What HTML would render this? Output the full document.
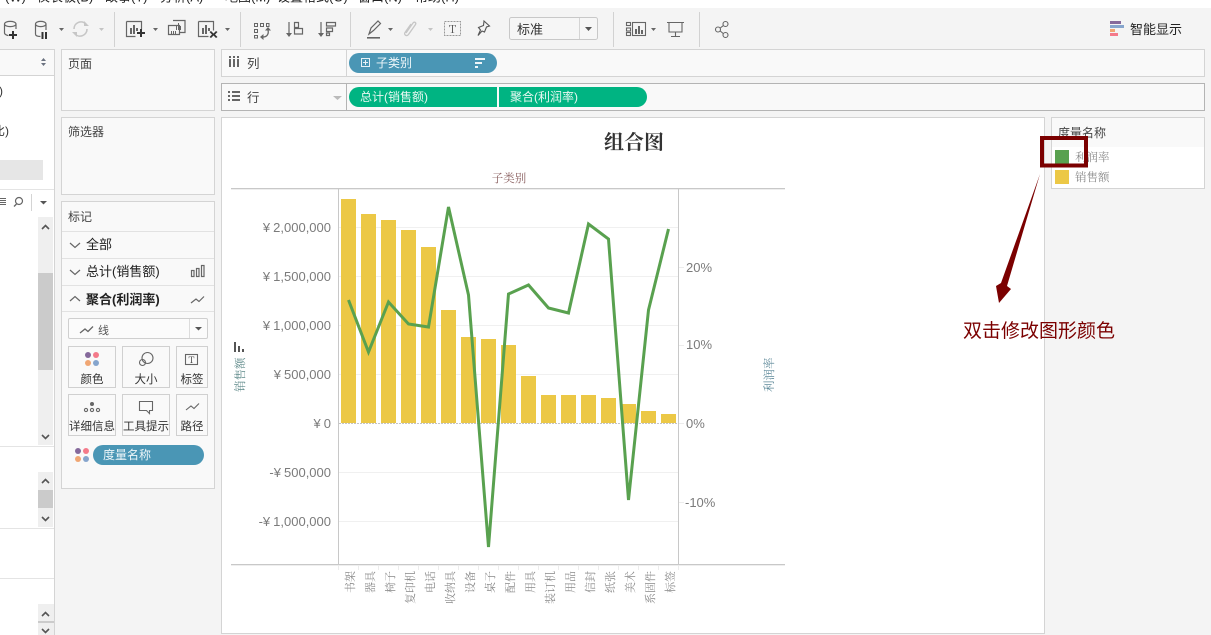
<!DOCTYPE html>
<html lang="zh"><head><meta charset="utf-8"><title>组合图</title>
<style>
html,body{margin:0;padding:0;width:1211px;height:635px;overflow:hidden;background:#f4f4f4}
body{position:relative;font-family:"Liberation Sans","Noto Sans CJK SC",sans-serif;color:#333}
svg{position:absolute;left:0;top:0}
text{font-family:"Liberation Sans","Noto Sans CJK SC",sans-serif}
.s,.s text{font-family:"Noto Serif CJK SC",serif}
</style></head><body>
<svg width="1211" height="635" viewBox="0 0 1211 635" xmlns="http://www.w3.org/2000/svg">
<!-- menu strip -->
<rect width="1211" height="8" fill="#fff"/>
<g font-size="13" fill="#222">
<text x="5" y="1.500">(W)</text><text x="37" y="1.500">仪表板(B)</text><text x="105" y="1.500">故事(T)</text><text x="160" y="1.500">分析(A)</text><text x="225" y="1.500">地图(M)</text><text x="277" y="1.500">设置格式(O)</text><text x="358" y="1.500">窗口(N)</text><text x="415" y="1.500">帮助(H)</text>
</g>
<!-- separators -->
<g fill="#d2d2d2"><rect x="114" y="12" width="1" height="35"/><rect x="240" y="12" width="1" height="35"/><rect x="350" y="12" width="1" height="35"/><rect x="613" y="12" width="1" height="35"/><rect x="699" y="12" width="1" height="35"/></g>
<!-- toolbar icons -->
<g fill="none" stroke="#666" stroke-width="1.200">
<path d="M4.500 24v9c0 1.500 3 2.500 4 2.500M16 24v5M4.500 24c0-3.500 11.500-3.500 11.500 0s-11.500 3.500-11.500 0z"/>
<path d="M35.500 24v10c0 2 3 2.500 5 2.500M46 24v6M35.500 24c0-3.500 10.500-3.500 10.500 0s-10.500 3.500-10.500 0z"/>
<path d="M126.500 21.500h15v8M126.500 21.500v15h9"/>
<path d="M198.500 21.500h15v9M198.500 21.500v15h10"/>
<path d="M173 20.500h12v12h-5M168.500 25.500h11v9h-11z"/>
</g>
<g fill="#333">
<path d="M12 31h2v3h3v2h-3v3h-2v-3h-3v-2h3z"/>
<rect x="41.500" y="32" width="2" height="7"/><rect x="45" y="32" width="2" height="7"/>
<path d="M140 29h2v3h3v2h-3v3h-2v-3h-3v-2h3z"/>
<path d="M209.500 32l1.500-1 2.500 2.500 2.500-2.500 1.500 1-2.500 2.500 2.500 2.500-1.500 1-2.500-2.500-2.500 2.500-1.500-1 2.500-2.500z"/>
</g>
<g fill="#666">
<rect x="130" y="28" width="2" height="6"/><rect x="133" y="25" width="2" height="9"/><rect x="136" y="28" width="2" height="3"/>
<rect x="202" y="28" width="2" height="6"/><rect x="205" y="25" width="2" height="9"/><rect x="208" y="28" width="2" height="3"/>
<rect x="176" y="25" width="1" height="5"/><rect x="178" y="23" width="1" height="7"/><rect x="180" y="26" width="1" height="4"/>
<rect x="171" y="31" width="1" height="3"/><rect x="173" y="31" width="1" height="3"/><rect x="175" y="31" width="1" height="3"/>
<path d="M59 28h5l-2.500 3zM153 28h5l-2.500 3zM225 28h5l-2.500 3zM388 28h5l-2.500 3zM651 28h5l-2.500 3z"/>
</g>
<g fill="#c4c4c4"><path d="M99 28h5l-2.500 3zM428 28h5l-2.500 3z"/></g>
<g fill="none" stroke="#c6c6c6" stroke-width="1.600"><path d="M74 29a7 7 0 0 1 12-5M87 29a7 7 0 0 1-12 5"/></g>
<path d="M84 21v5h5zM77 37v-5h-5z" fill="#c6c6c6"/>
<!-- swap -->
<g fill="none" stroke="#666" stroke-width="1">
<path d="M254.500 23.500h3v3h-3zM260.500 23.500h3v3h-3zM266.500 23.500h2.500v3h-2.500zM254.500 29.500h3v3h-3zM254.500 35.500h3v2.500h-3z"/>
<path d="M268 30c1 4-1 7-5 7" stroke-width="1.300"/>
</g>
<path d="M268 27l3 3.500h-6zM260 37l3.500-3v6z" fill="#666"/>
<!-- sort -->
<g fill="none" stroke="#666" stroke-width="1.200">
<path d="M289 22v13M294.500 22.500h4v5h-4zM294.500 28.500h8v5.500h-8z"/>
<path d="M321 22v13M326.500 22.500h9v3.500h-9zM326.500 28h6v3.500h-6zM326.500 33h3v2.500h-3z"/>
</g>
<path d="M286 33h6l-3 4zM318 33h6l-3 4z" fill="#666"/>
<!-- highlighter -->
<path d="M369 34l2-6 7-7 2.500 2.500-7 7z" fill="none" stroke="#666" stroke-width="1.200"/>
<rect x="367" y="37" width="13" height="1.600" fill="#666"/>
<!-- clip -->
<path d="M406 33l7-10c1.500-2 3.500 0 2.500 1.500l-7 10c-2 2.500-5 0-3.500-2l6-8.500" fill="none" stroke="#c6c6c6" stroke-width="1.300"/>
<!-- T box -->
<rect x="444.500" y="21.500" width="16" height="14" fill="none" stroke="#999" stroke-dasharray="2 1"/>
<text x="452.500" y="33" font-size="11" class="s" text-anchor="middle" fill="#555">T</text>
<!-- pin -->
<path d="M484 21l5.500 5-3 1-2 5-2.500-1-4 4.500 2.500-5.500-2-2.500 5-2z" fill="none" stroke="#555" stroke-width="1.100"/>
<!-- style dropdown -->
<rect x="509.500" y="17.500" width="88" height="22" rx="2" fill="#f6f6f6" stroke="#c8c8c8"/>
<rect x="579" y="18" width="1" height="21" fill="#d4d4d4"/>
<path d="M585 27h7l-3.500 4z" fill="#555"/>
<text x="517" y="34" font-size="13" fill="#333">标准</text>
<!-- show cards -->
<g fill="none" stroke="#666" stroke-width="1.100">
<rect x="626.500" y="22.500" width="4" height="3"/><rect x="626.500" y="28" width="4" height="3"/><rect x="626.500" y="32.500" width="4" height="3"/>
<rect x="632.500" y="22.500" width="13" height="13"/>
<path d="M667 22.500h17M669 22.500v9.500h13v-9.500M675.500 32v4M671 36.500h9"/>
<circle cx="725.500" cy="24" r="2.500"/><circle cx="718" cy="29.500" r="2.500"/><circle cx="725.500" cy="35" r="2.500"/>
<path d="M720.200 28l3-2.300M720.200 31l3 2.500"/>
</g>
<g fill="#666"><rect x="635" y="29" width="2" height="5"/><rect x="638" y="26" width="2" height="8"/><rect x="641" y="30" width="2" height="4"/></g>
<!-- smart show -->
<rect x="1110" y="21" width="11" height="3" fill="#85699b"/><rect x="1110" y="25" width="14" height="3" fill="#86a5cd"/><rect x="1110" y="29" width="5" height="3" fill="#f0a673"/><rect x="1110" y="33" width="8" height="3" fill="#f47a8a"/>
<text x="1130" y="34" font-size="13" fill="#222">智能显示</text>

<!-- left data pane -->
<rect x="0" y="49" width="54" height="586" fill="#fff"/>
<rect x="0" y="49" width="54" height="26" fill="#f9f9f9"/>
<rect x="0" y="49" width="54" height="1" fill="#d4d4d4"/>
<rect x="0" y="75" width="54" height="1" fill="#d4d4d4"/>
<rect x="54" y="49" width="1" height="586" fill="#d4d4d4"/>
<path d="M41 61l2.500-3 2.500 3zM41 63l2.500 3 2.500-3z" fill="#6b7280"/>
<text x="-1" y="95" font-size="12" fill="#333">)</text>
<text x="-7" y="135" font-size="12" fill="#333">比)</text>
<rect x="0" y="160" width="43" height="20" fill="#e6e6e6"/>
<rect x="0" y="189" width="54" height="1" fill="#e4e4e4"/>
<g fill="#666"><rect x="0" y="198" width="6" height="1"/><rect x="0" y="200" width="6" height="1"/><rect x="0" y="202" width="6" height="1"/><rect x="0" y="204" width="6" height="1"/></g>
<circle cx="19" cy="201" r="3.500" fill="none" stroke="#666" stroke-width="1.200"/><path d="M16.500 204l-2.500 2.500" stroke="#666" stroke-width="1.300"/>
<rect x="31" y="194" width="1" height="17" fill="#d4d4d4"/>
<path d="M40 201h7l-3.500 3.500z" fill="#555"/>
<rect x="38" y="217" width="15" height="228" fill="#efefef"/>
<rect x="38" y="273" width="15" height="97" fill="#cbcbcb"/>
<rect x="0" y="446" width="54" height="1" fill="#e4e4e4"/>
<rect x="38" y="472" width="15" height="55" fill="#efefef"/>
<rect x="38" y="490" width="15" height="18" fill="#cbcbcb"/>
<rect x="0" y="528" width="54" height="1" fill="#e4e4e4"/>
<rect x="0" y="578" width="54" height="1" fill="#e4e4e4"/>
<rect x="38" y="604" width="16" height="31" fill="#efefef"/>
<rect x="38" y="621" width="16" height="2" fill="#cbcbcb"/>
<g fill="none" stroke="#555" stroke-width="1.600">
<path d="M42 229l3.500-3.500 3.500 3.500M42 435l3.500 3.500 3.500-3.500M42 483l3.500-3.500 3.500 3.500M42 517l3.500 3.500 3.500-3.500M42 616l3.500-3.500 3.500 3.500M42 629l3.500 3.500 3.500-3.500"/>
</g>

<!-- pages -->
<rect x="61.500" y="49.500" width="153" height="61" fill="#f9f9f9" stroke="#d4d4d4"/>
<text x="68" y="68" font-size="12" fill="#444">页面</text>
<!-- filters -->
<rect x="61.500" y="117.500" width="153" height="77" fill="#f9f9f9" stroke="#d4d4d4"/>
<text x="68" y="136" font-size="12" fill="#444">筛选器</text>
<!-- marks -->
<rect x="61.500" y="201.500" width="153" height="287" fill="#f9f9f9" stroke="#d4d4d4"/>
<text x="68" y="221" font-size="12" fill="#444">标记</text>
<g fill="#e2e2e2"><rect x="62" y="231" width="152" height="1"/><rect x="62" y="258" width="152" height="1"/><rect x="62" y="285" width="152" height="1"/><rect x="62" y="311" width="152" height="1"/></g>
<g fill="none" stroke="#666" stroke-width="1.200">
<path d="M70 243l5 4.500 5-4.500M70 270l5 4.500 5-4.500M70 301l5-4.500 5 4.500"/>
<rect x="191.500" y="270.500" width="2.500" height="6"/><rect x="196.500" y="268.500" width="2.500" height="8"/><rect x="201.500" y="265.500" width="2.500" height="11"/>
<path d="M191 303l5-4 3 2.500 5-5"/>
</g>
<text x="86" y="249" font-size="13" fill="#222">全部</text>
<text x="86" y="276" font-size="13" fill="#222">总计(销售额)</text>
<text x="86" y="304" font-size="13" font-weight="700" fill="#222">聚合(利润率)</text>
<rect x="68.500" y="318.500" width="139" height="20" rx="1.500" fill="#fbfbfb" stroke="#cfcfcf"/>
<rect x="189" y="319" width="1" height="19" fill="#dcdcdc"/>
<path d="M195 327h7l-3.500 3.500z" fill="#555"/>
<path d="M80 333l5-4 3 2.500 5-5" fill="none" stroke="#666" stroke-width="1.300"/>
<text x="98" y="334" font-size="11" fill="#555">线</text>
<g fill="#f9f9f9" stroke="#d0d0d0">
<rect x="68.500" y="346.500" width="47" height="41"/><rect x="122.500" y="346.500" width="47" height="41"/><rect x="176.500" y="346.500" width="31" height="41"/>
<rect x="68.500" y="394.500" width="47" height="41"/><rect x="122.500" y="394.500" width="47" height="41"/><rect x="176.500" y="394.500" width="31" height="41"/>
</g>
<circle cx="88" cy="355" r="3" fill="#85699b"/><circle cx="96" cy="355" r="3" fill="#f47a8a"/><circle cx="88" cy="363" r="3" fill="#f0a673"/><circle cx="96" cy="363" r="3" fill="#86a5cd"/>
<g fill="none" stroke="#666" stroke-width="1.100">
<circle cx="147.500" cy="358" r="5.500"/><circle cx="142.500" cy="362.500" r="3"/>
<rect x="185.500" y="354.500" width="12" height="10"/>
<circle cx="86" cy="410" r="1.600"/><circle cx="92" cy="410" r="1.600"/><circle cx="98" cy="410" r="1.600"/>
<path d="M139.500 401.500h13v9h-3v3l-3-3h-7z"/>
<path d="M186 410l5-4 3 2.500 5-5"/>
</g>
<circle cx="92" cy="404" r="2" fill="#666"/>
<text x="191.500" y="363" font-size="9" class="s" text-anchor="middle" fill="#444">T</text>
<g font-size="11.500" fill="#333" text-anchor="middle">
<text x="92" y="383">颜色</text><text x="146" y="383">大小</text><text x="192" y="383">标签</text>
<text x="92" y="430">详细信息</text><text x="146" y="430">工具提示</text><text x="192" y="430">路径</text>
</g>
<circle cx="78" cy="451" r="3" fill="#85699b"/><circle cx="86" cy="451" r="3" fill="#f47a8a"/><circle cx="78" cy="459" r="3" fill="#f0a673"/><circle cx="86" cy="459" r="3" fill="#86a5cd"/>
<rect x="93" y="445" width="111" height="20" rx="10" fill="#4a96b5"/>
<text x="103" y="459" font-size="12" fill="#eef6f9">度量名称</text>

<!-- shelves -->
<rect x="221.500" y="49.500" width="983" height="27" fill="#f9f9f9" stroke="#d4d4d4"/>
<rect x="346" y="50" width="1" height="27" fill="#d4d4d4"/>
<rect x="221.500" y="83.500" width="983" height="27" fill="#f9f9f9" stroke="#b4b4b4"/>
<rect x="346" y="84" width="1" height="27" fill="#b4b4b4"/>
<g fill="#666"><rect x="229" y="59" width="2" height="8"/><rect x="233" y="59" width="2" height="8"/><rect x="237" y="59" width="2" height="8"/><rect x="229" y="56" width="2" height="2"/><rect x="233" y="56" width="2" height="2"/><rect x="237" y="56" width="2" height="2"/>
<rect x="228" y="91" width="2" height="2"/><rect x="228" y="95" width="2" height="2"/><rect x="228" y="99" width="2" height="2"/><rect x="232" y="91" width="8" height="2"/><rect x="232" y="95" width="8" height="2"/><rect x="232" y="99" width="8" height="2"/></g>
<text x="247" y="68" font-size="12.500" fill="#444">列</text>
<text x="247" y="102" font-size="12.500" fill="#444">行</text>
<path d="M333 96h9l-4.500 4z" fill="#bbb"/>
<rect x="349" y="53" width="148" height="20" rx="10" fill="#4a96b5"/>
<g fill="none" stroke="#e8f2f6"><rect x="361.500" y="58.500" width="8" height="8"/><path d="M365.500 60v5M363 62.500h5"/></g>
<text x="376" y="67" font-size="12" fill="#eef6f9">子类别</text>
<g fill="#eef6f9"><rect x="475" y="58" width="10" height="2"/><rect x="475" y="62" width="7" height="2"/><rect x="475" y="66" width="3" height="2"/></g>
<path d="M359 87h138v20h-138a10 10 0 0 1 0-20z" fill="#00b482"/>
<path d="M499 87h138a10 10 0 0 1 0 20h-138z" fill="#00b482"/>
<text x="360" y="101" font-size="12" fill="#e8f8f2">总计(销售额)</text>
<text x="510" y="101" font-size="12" fill="#e8f8f2">聚合(利润率)</text>

<!-- view -->
<rect x="221.500" y="117.500" width="823" height="516" fill="#fff" stroke="#d4d4d4"/>
<text x="634" y="149" font-size="20" font-weight="700" class="s" text-anchor="middle" fill="#333">组合图</text>
<text x="509" y="182" font-size="11.500" class="s" text-anchor="middle" fill="#8b6161">子类别</text>
<g fill="#f0f0f0"><rect x="339" y="227" width="339" height="1"/><rect x="339" y="276" width="339" height="1"/><rect x="339" y="325" width="339" height="1"/><rect x="339" y="374" width="339" height="1"/><rect x="339" y="472" width="339" height="1"/><rect x="339" y="521" width="339" height="1"/></g>
<g fill="#ecc846">
<rect x="341" y="199" width="15" height="224"/><rect x="361" y="214" width="15" height="209"/><rect x="381" y="220" width="15" height="203"/><rect x="401" y="230" width="15" height="193"/><rect x="421" y="247" width="15" height="176"/><rect x="441" y="310" width="15" height="113"/><rect x="461" y="337" width="15" height="86"/><rect x="481" y="339" width="15" height="84"/><rect x="501" y="345" width="15" height="78"/><rect x="521" y="376" width="15" height="47"/><rect x="541" y="395" width="15" height="28"/><rect x="561" y="395" width="15" height="28"/><rect x="581" y="395" width="15" height="28"/><rect x="601" y="398" width="15" height="25"/><rect x="621" y="404" width="15" height="19"/><rect x="641" y="411" width="15" height="12"/><rect x="661" y="414" width="15" height="9"/>
</g>
<path d="M339 423.500H678" stroke="#c4c4c4" stroke-dasharray="2 1" fill="none"/>
<g fill="#c8c8c8"><rect x="231" y="188" width="554" height="1.300"/><rect x="231" y="564" width="554" height="1.300"/><rect x="338" y="188" width="1" height="377"/><rect x="678" y="188" width="1" height="377"/></g>
<path d="M338.500 565v5M358.500 565v5M378.500 565v5M398.500 565v5M418.500 565v5M438.500 565v5M458.500 565v5M478.500 565v5M498.500 565v5M518.500 565v5M538.500 565v5M558.500 565v5M578.500 565v5M598.500 565v5M618.500 565v5M638.500 565v5M658.500 565v5M678.500 565v5M679 267.500h5M679 345.500h5M679 423.500h5M679 502.500h5" stroke="#ececec" fill="none"/>
<polyline points="348.500,300 368.500,352 388.500,302 408.500,324 428.500,327 448.500,207 468.500,295 488.500,547 508.500,294 528.500,285 548.500,308 568.500,313 588.500,224 608.500,239 628.500,500 648.500,310 668.500,229" fill="none" stroke="#59a14f" stroke-width="3" stroke-linejoin="miter"/>
<g font-size="13" fill="#7b7b7b" text-anchor="end">
<text x="331" y="232"><tspan letter-spacing="3">¥</tspan>2,000,000</text><text x="331" y="281"><tspan letter-spacing="3">¥</tspan>1,500,000</text><text x="331" y="330"><tspan letter-spacing="3">¥</tspan>1,000,000</text><text x="331" y="379"><tspan letter-spacing="3">¥</tspan>500,000</text><text x="331" y="428"><tspan letter-spacing="3">¥</tspan>0</text><text x="331" y="477">-<tspan letter-spacing="3">¥</tspan>500,000</text><text x="331" y="526">-<tspan letter-spacing="3">¥</tspan>1,000,000</text>
</g>
<g font-size="13" fill="#7b7b7b">
<text x="686" y="272">20%</text><text x="686" y="349">10%</text><text x="686" y="428">0%</text><text x="685" y="507">-10%</text>
</g>
<g fill="#555"><rect x="234" y="342" width="2" height="10"/><rect x="238" y="346" width="2" height="6"/><rect x="242" y="349" width="2" height="3"/></g>
<text transform="translate(244,392) rotate(-90)" font-size="11.500" class="s" fill="#5f8a8a">销售额</text>
<text transform="translate(773,392) rotate(-90)" font-size="11.500" class="s" fill="#5f8a9a">利润率</text>
<g font-size="11" class="s" fill="#8a8a8a" text-anchor="end">
<text transform="translate(354,571) rotate(-90)">书架</text>
<text transform="translate(374,571) rotate(-90)">器具</text>
<text transform="translate(394,571) rotate(-90)">椅子</text>
<text transform="translate(414,571) rotate(-90)">复印机</text>
<text transform="translate(434,571) rotate(-90)">电话</text>
<text transform="translate(454,571) rotate(-90)">收纳具</text>
<text transform="translate(474,571) rotate(-90)">设备</text>
<text transform="translate(494,571) rotate(-90)">桌子</text>
<text transform="translate(514,571) rotate(-90)">配件</text>
<text transform="translate(534,571) rotate(-90)">用具</text>
<text transform="translate(554,571) rotate(-90)">装订机</text>
<text transform="translate(574,571) rotate(-90)">用品</text>
<text transform="translate(594,571) rotate(-90)">信封</text>
<text transform="translate(614,571) rotate(-90)">纸张</text>
<text transform="translate(634,571) rotate(-90)">美术</text>
<text transform="translate(654,571) rotate(-90)">系固件</text>
<text transform="translate(674,571) rotate(-90)">标签</text>
</g>

<!-- legend -->
<rect x="1051.500" y="117.500" width="153" height="71" fill="#f9f9f9" stroke="#d4d4d4"/>
<rect x="1052" y="147" width="152" height="41" fill="#fff"/>
<text x="1058" y="137" font-size="12" fill="#444">度量名称</text>
<rect x="1055" y="150" width="14" height="14" fill="#59a14f"/>
<rect x="1055" y="170" width="14" height="14" fill="#ecc846"/>
<text x="1075" y="161" font-size="11.500" class="s" fill="#8a8a8a">利润率</text>
<text x="1075" y="181" font-size="11.500" class="s" fill="#8a8a8a">销售额</text>

<!-- annotation -->
<rect x="1042" y="138" width="44" height="27.500" fill="none" stroke="#7b0000" stroke-width="4"/>
<polygon points="1040,174 1007,286 1011,289 999,303 996,286 1001,283" fill="#7b0000"/>
<text x="963" y="337" font-size="19" fill="#7b0000">双击修改图形颜色</text>
</svg>
</body></html>
